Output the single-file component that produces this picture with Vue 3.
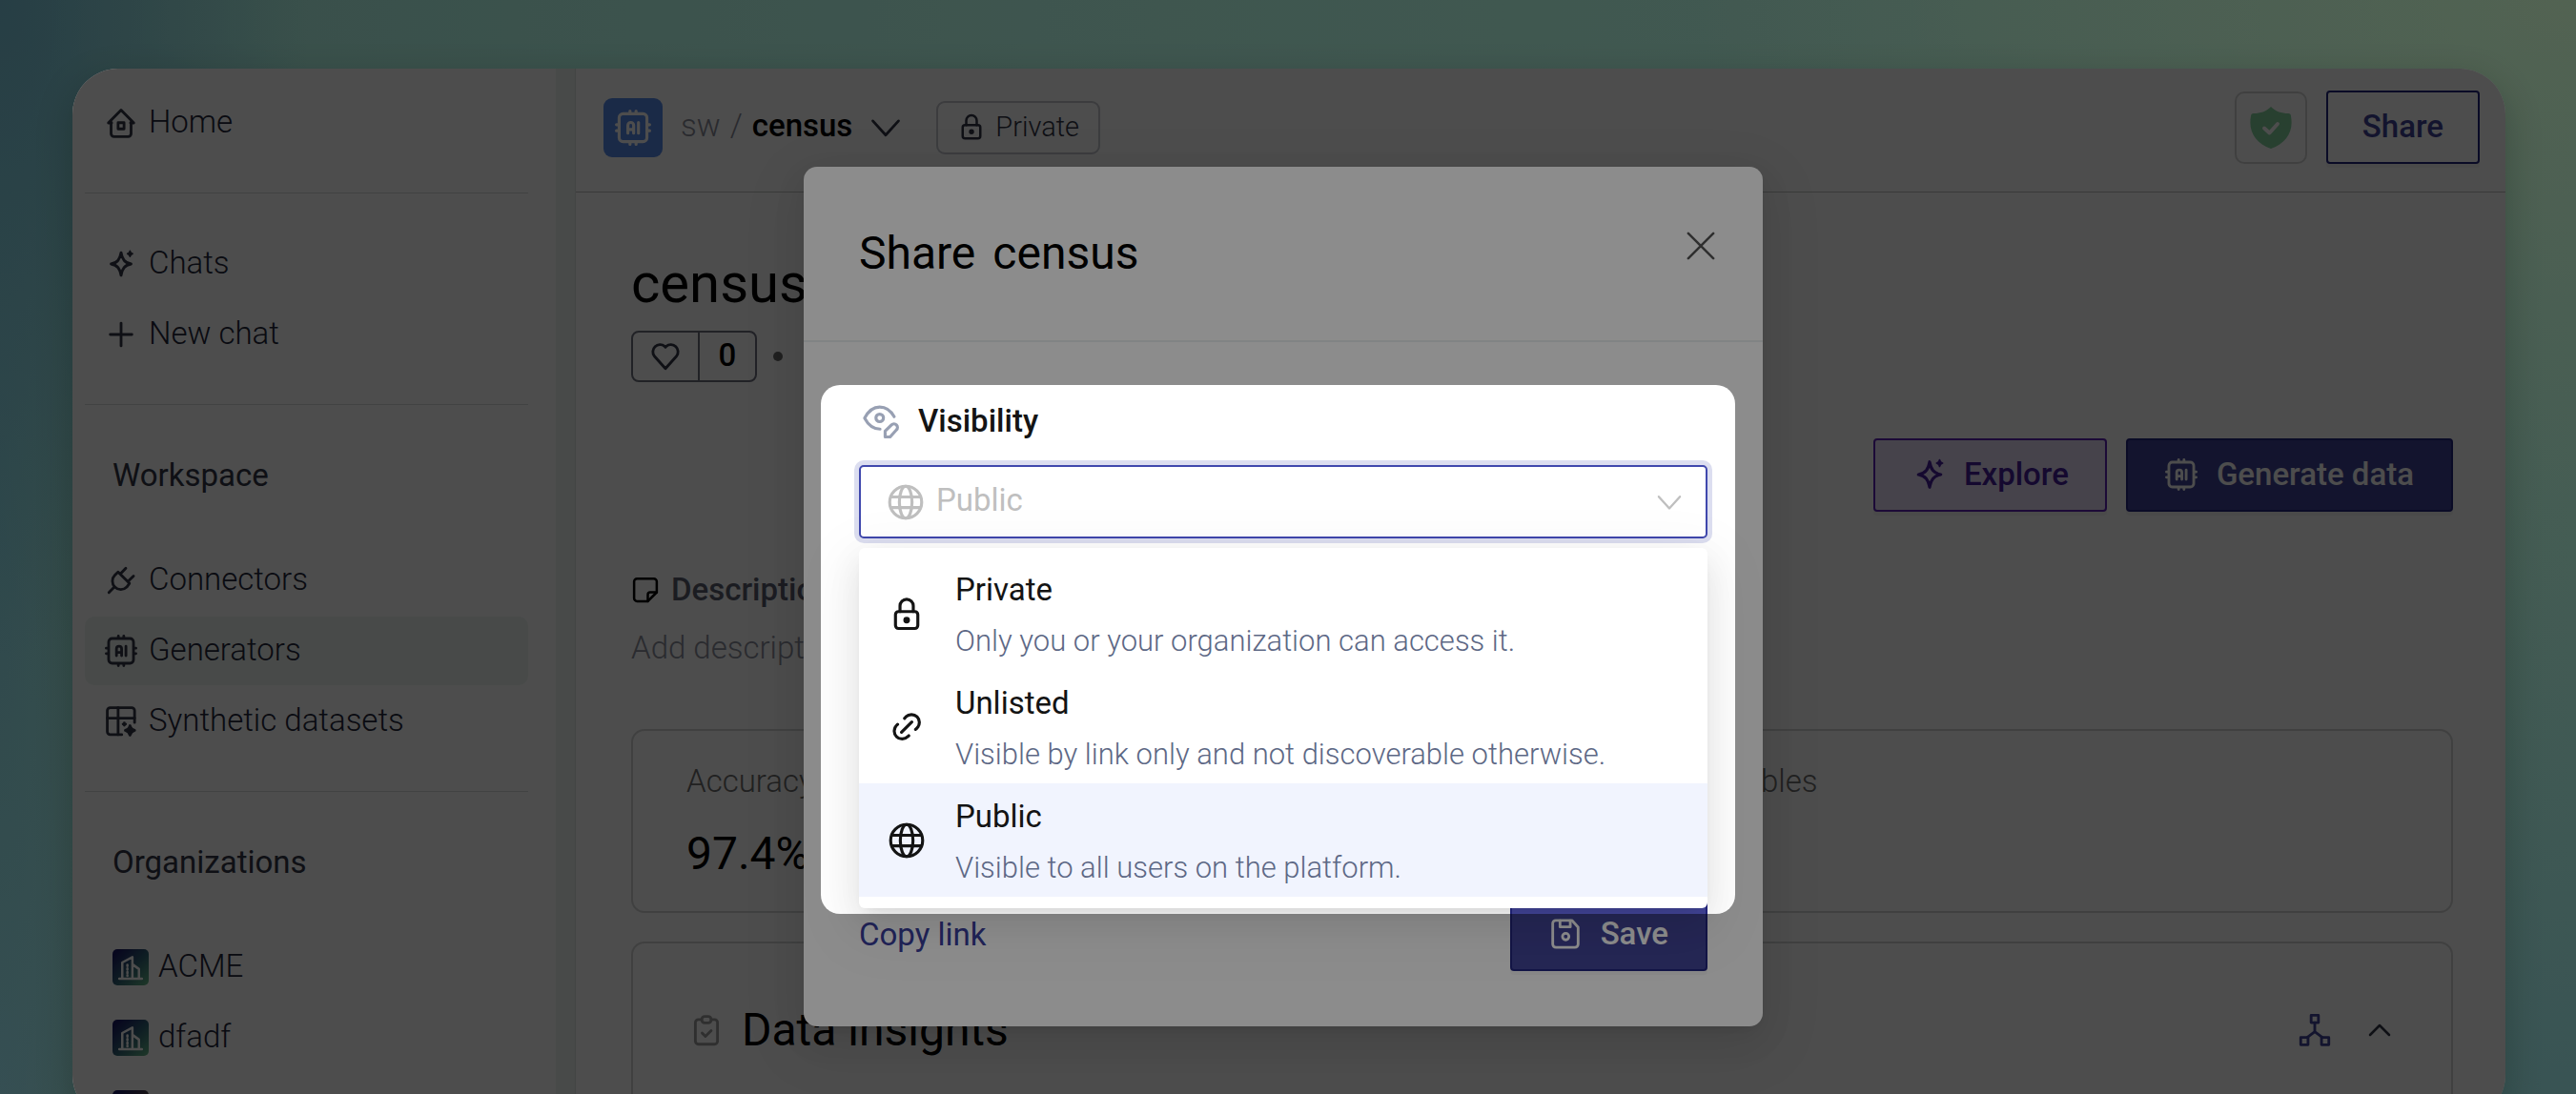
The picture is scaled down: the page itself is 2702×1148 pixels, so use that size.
<script setup>
import { ref } from 'vue'

const icons = {
  home: '<path d="M5 12H2.6L12 2.4 21.4 12H19"/><path d="M4.6 11.6V20a2.2 2.2 0 0 0 2.2 2.2h10.400a2.200 2.200 0 0 0 2.200-2.200v-8.400"/><rect x="9.800" y="11.800" width="4.400" height="4.600"/>',
  sparkles: '<path d="M12 3.600c.9 5 2.600 7.500 7.400 8.400-4.800.9-6.500 3.400-7.400 8.400-.9-5-2.600-7.500-7.400-8.400 4.800-.9 6.500-3.400 7.400-8.400z"/><path d="M18.600 2.200c.3 1.300.8 1.900 2 2.200-1.200.3-1.700.9-2 2.200-.3-1.300-.8-1.900-2-2.200 1.200-.3 1.700-.9 2-2.200z" fill="currentColor" stroke-width="1"/>',
  plus: '<path d="M12 3.600v16.800M4 12h16"/>',
  plug: '<path d="M9.800 5.800l8.400 8.400-2 2.800a5.700 5.700 0 1 1-8.800-8.800z"/><path d="M3 21l4-4M15.500 3l-3.700 3.900M21.200 8.800l-4 3.900"/>',
  chip: '<rect x="2.800" y="2.800" width="18.400" height="18.400" rx="2.600"/><path d="M8.600 15.600V10.400a1.900 1.900 0 0 1 3.800 0v5.200M8.600 13.200h3.800M15.600 8.600v7"/><path d="M10 2.600V1M14 2.600V1M10 23v-1.600M14 23v-1.600M2.600 10H1M2.600 14H1M23 10h-1.600M23 14h-1.600"/>',
  table: '<path d="M12.500 21.800H4a2.200 2.200 0 0 1-2.200-2.200V4A2.200 2.200 0 0 1 4 1.800h15.800A2.200 2.200 0 0 1 22 4v8.800"/><path d="M1.800 9.600H22M9.800 1.800v20"/><path d="M18.600 15.200c.5 2 1.200 2.900 3.400 3.500-2.200.6-2.900 1.500-3.400 3.500-.5-2-1.200-2.900-3.400-3.500 2.200-.6 2.900-1.500 3.400-3.500zM14.400 13.200v1.700M13.500 14h1.800" fill="currentColor"/>',
  lock: '<rect x="4.600" y="10.600" width="14.800" height="11.200" rx="2"/><path d="M7.600 10.600V6.800a4.400 4.400 0 0 1 8.800 0v3.800"/><circle cx="12" cy="16.200" r="1.200" fill="currentColor"/>',
  link: '<path d="M8.600 15.400l6.800-6.800"/><path d="M10.600 6.200l.9-1a5.200 5.200 0 0 1 7.400 7.400l-1 .9"/><path d="M13.400 17.700l-.6.600a5.200 5.200 0 0 1-7.500-7.400l.7-.7"/>',
  globe: '<circle cx="12" cy="12" r="10.600"/><path d="M2.200 8.500h19.600M2.200 15.500h19.600"/><ellipse cx="12" cy="12" rx="4.200" ry="10.600"/>',
  down: '<path d="M2.500 7l9.500 10.500L21.500 7"/>',
  up: '<path d="M4 16l8-8 8 8"/>',
  heart: '<path d="M12 21L3.800 11.800A5.300 5.300 0 0 1 11.400 4.500l.6.700.6-.7a5.300 5.300 0 0 1 7.600 7.300z"/>',
  note: '<path d="M14 21.500H5A2.500 2.500 0 0 1 2.500 19V5A2.500 2.500 0 0 1 5 2.500h14A2.500 2.500 0 0 1 21.500 5v9z"/><path d="M14 21.500V16a2 2 0 0 1 2-2h5.500"/>',
  clipboard: '<path d="M8.500 4.200H6A2.200 2.200 0 0 0 3.800 6.400v13.800A2.200 2.200 0 0 0 6 22.400h12a2.200 2.200 0 0 0 2.200-2.200V6.400A2.200 2.200 0 0 0 18 4.200h-2.500"/><rect x="8.500" y="1.800" width="7" height="4.800" rx="2.200"/><path d="M8.800 14.200l2.400 2.400 4.300-4.300"/>',
  network: '<rect x="9.300" y="1" width="5.400" height="5.400"/><rect x="1.600" y="17.400" width="5.400" height="5.400"/><rect x="17" y="17.400" width="5.400" height="5.400"/><path d="M12 6.400v7M6.400 17.400L12 13.200l5.600 4.200"/>',
  save: '<path d="M4.800 2h12L21.400 7v12.600a2.400 2.400 0 0 1-2.400 2.400H5A2.400 2.400 0 0 1 2.600 19.600V4.200A2.200 2.200 0 0 1 4.800 2z"/><path d="M8 2.200v4.600h7.600V2.200"/><circle cx="12.200" cy="14" r="2.400"/>',
  close: '<path d="M1.500 1.500l21 21M22.500 1.500l-21 21"/>',
  eye: '<circle cx="11.200" cy="9.800" r="2.500"/><path d="M11.400 17.200C7 17.200 3.700 14.800 1.200 10 3.700 5.100 7 2.600 11.200 2.600c4 0 7.200 2.200 9.600 6.400"/><path d="M14.800 22.400v-3.800l4.200-4.200a2.300 2.300 0 0 1 3.300 3.300l-4.200 4.700z"/>',
  building: '<path d="M2.500 21.500h19M5 21.500V8l8.500-4.500v18M13.500 9.500l5.500 4v8"/><path d="M9.300 10v1M9.300 13v1M9.300 16v1M9.300 18.600v.6"/>',
}

const workspace = [
  { label: 'Connectors', icon: 'plug', active: false },
  { label: 'Generators', icon: 'chip', active: true },
  { label: 'Synthetic datasets', icon: 'table', active: false },
]

const organizations = [
  { label: 'ACME', tone: 'teal' },
  { label: 'dfadf', tone: 'teal' },
  { label: 'Display Org 1743811528', tone: 'olive' },
]

const options = [
  { label: 'Private', icon: 'lock', text: 'Only you or your organization can access it.' },
  { label: 'Unlisted', icon: 'link', text: 'Visible by link only and not discoverable otherwise.' },
  { label: 'Public', icon: 'globe', text: 'Visible to all users on the platform.' },
]

const visibility = ref('Public')
</script>

<template>
  <div class="backdrop">
    <div class="window">
      <aside class="sidebar">
        <nav class="nav">
          <a class="item" href="#"><svg class="icon" viewBox="0 0 24 24" v-html="icons.home" /><span>Home</span></a>
          <hr class="rule" />
          <a class="item" href="#"><svg class="icon" viewBox="0 0 24 24" v-html="icons.sparkles" /><span>Chats</span></a>
          <a class="item" href="#"><svg class="icon" viewBox="0 0 24 24" v-html="icons.plus" /><span>New chat</span></a>
          <hr class="rule" />
          <h2 class="group">Workspace</h2>
          <a
            v-for="entry in workspace"
            :key="entry.label"
            class="item"
            :class="{ active: entry.active }"
            href="#"
          ><svg class="icon" viewBox="0 0 24 24" v-html="icons[entry.icon]" /><span>{{ entry.label }}</span></a>
          <hr class="rule" />
          <h2 class="group">Organizations</h2>
          <a v-for="org in organizations" :key="org.label" class="item org" href="#">
            <span class="avatar" :class="org.tone"><svg class="glyph" viewBox="0 0 24 24" v-html="icons.building" /></span>
            <span>{{ org.label }}</span>
          </a>
        </nav>
      </aside>

      <main class="main">
        <header class="topbar">
          <span class="tile"><svg class="icon large" viewBox="0 0 24 24" v-html="icons.chip" /></span>
          <div class="crumbs"><a href="#">sw</a><span>/</span><strong>census</strong></div>
          <button class="plain" type="button" aria-label="Switch generator"><svg class="icon" viewBox="0 0 24 24" v-html="icons.down" /></button>
          <span class="badge"><svg class="icon small" viewBox="0 0 24 24" v-html="icons.lock" />Private</span>
          <span class="shield">
            <svg class="shield-icon" viewBox="0 0 44 44">
              <path d="M22 0c5 5 11 7 18 7 2 0 3 1 3 3 3 16-5 28-21 34C6 38-2 26 1 10c0-2 1-3 3-3 7 0 13-2 18-7z" fill="#85d5a0" />
              <path d="M15 22.500l5.500 5L29 18" fill="none" stroke="#fff" stroke-width="4" stroke-linecap="round" stroke-linejoin="round" />
            </svg>
          </span>
          <button class="button outline" type="button">Share</button>
        </header>

        <section class="content">
          <h1 class="title">census</h1>
          <div class="meta">
            <div class="likes">
              <button class="like" type="button" aria-label="Like"><svg class="icon" viewBox="0 0 24 24" v-html="icons.heart" /></button>
              <span class="count">0</span>
            </div>
            <span class="dot"></span>
          </div>
          <div class="actions">
            <button class="button violet" type="button"><svg class="icon large" viewBox="0 0 24 24" v-html="icons.sparkles" />Explore</button>
            <button class="button solid" type="button"><svg class="icon" viewBox="0 0 24 24" v-html="icons.chip" />Generate data</button>
          </div>
          <h3 class="subhead"><svg class="icon small" viewBox="0 0 24 24" v-html="icons.note" />Description</h3>
          <p class="hint">Add description</p>

          <div class="card stats">
            <div class="stat"><span class="stat-label">Accuracy</span><span class="stat-value">97.4%</span></div>
            <div class="stat tables"><span class="stat-label">Tables</span><span class="stat-value">1</span></div>
          </div>

          <div class="card insights">
            <svg class="icon muted" viewBox="0 0 24 24" v-html="icons.clipboard" />
            <h2 class="insights-title">Data insights</h2>
            <button class="plain graph" type="button" aria-label="Show model"><svg class="icon" viewBox="0 0 24 24" v-html="icons.network" /></button>
            <button class="plain" type="button" aria-label="Collapse"><svg class="icon small" viewBox="0 0 24 24" v-html="icons.up" /></button>
          </div>
        </section>
      </main>

      <div class="mask">
        <section class="modal" role="dialog" aria-label="Share census">
          <header class="modal-head">
            <h2 class="modal-title"><span>Share</span><span>census</span></h2>
            <button class="plain close" type="button" aria-label="Close"><svg class="icon small" viewBox="0 0 24 24" v-html="icons.close" /></button>
          </header>
          <div class="modal-body">
            <div class="field">
              <label class="field-label" for="visibility"><svg class="icon eye" viewBox="0 0 24 24" v-html="icons.eye" />Visibility</label>
              <div class="select-box">
                <svg class="icon lead" viewBox="0 0 24 24" v-html="icons.globe" />
                <select id="visibility" v-model="visibility" class="select">
                  <option v-for="option in options" :key="option.label">{{ option.label }}</option>
                </select>
                <svg class="icon caret" viewBox="0 0 24 24" v-html="icons.down" />
                <ul class="menu" role="listbox">
                  <li
                    v-for="option in options"
                    :key="option.label"
                    class="option"
                    :class="{ chosen: option.label === visibility }"
                    role="option"
                    @click="visibility = option.label"
                  >
                    <svg class="icon option-icon" viewBox="0 0 24 24" v-html="icons[option.icon]" />
                    <div class="option-text">
                      <div class="option-label">{{ option.label }}</div>
                      <div class="option-note">{{ option.text }}</div>
                    </div>
                  </li>
                </ul>
              </div>
              <div class="spotlight"></div>
            </div>
            <footer class="modal-foot">
              <a class="copy" href="#">Copy link</a>
              <button class="button solid" type="button"><svg class="icon" viewBox="0 0 24 24" v-html="icons.save" />Save</button>
            </footer>
          </div>
        </section>
      </div>
    </div>
  </div>
</template>

<style>
body {
  margin: 0;
}
</style>

<style scoped>
.backdrop,
.backdrop * {
  box-sizing: border-box;
}

.backdrop {
  height: 100vh;
  overflow: hidden;
  padding: 72px 74px 0 76px;
  font-family: Roboto, "Liberation Sans", sans-serif;
  font-size: 33px;
  line-height: 48px;
  color: #000;
  background:
    radial-gradient(ellipse 12% 60% at 0 0, #47727e 0, rgba(71, 114, 126, 0) 100%),
    radial-gradient(ellipse 4% 90% at 0 45%, #57868c 0, rgba(87, 134, 140, 0) 100%),
    radial-gradient(ellipse 5% 50% at 0 100%, #6a979f 0, rgba(106, 151, 159, 0) 100%),
    radial-gradient(ellipse 34% 50% at 100% 0, #96b496 0, rgba(150, 180, 150, 0) 100%),
    radial-gradient(ellipse 20% 60% at 100% 110%, #64969a 0, rgba(100, 150, 154, 0) 100%),
    linear-gradient(90deg, #668f86 0, #729c90 40%, #7da999 100%);
}

h1,
h2,
h3,
p,
ul {
  margin: 0;
  padding: 0;
  font-size: inherit;
  font-weight: 400;
}

a {
  color: inherit;
  text-decoration: none;
}

button {
  font-family: inherit;
  font-size: inherit;
  line-height: inherit;
  cursor: pointer;
}

.icon,
.glyph {
  flex: none;
  width: 34px;
  height: 34px;
  fill: none;
  stroke: currentColor;
  stroke-width: 2;
  stroke-linecap: round;
  stroke-linejoin: round;
}

.icon.small {
  width: 30px;
  height: 30px;
}

.icon.large {
  width: 38px;
  height: 38px;
}

.plain {
  display: flex;
  padding: 0;
  border: 0;
  background: none;
  color: #333747;
}

.window {
  position: relative;
  display: flex;
  height: calc(100vh - 44px);
  border-radius: 48px;
  background: #fff;
  box-shadow: 0 12px 36px rgba(0, 30, 20, 0.25);
}

/* Sidebar */
.sidebar {
  flex: none;
  width: 528px;
  overflow: hidden;
  padding: 21px 49px 0 13px;
  border-right: 1px solid #e0e5e3;
  border-radius: 48px 0 0 48px;
  background: linear-gradient(90deg, #fff 507px, #f0f6f3 507px);
}

.nav {
  display: flex;
  flex-direction: column;
  gap: 2px;
}

.item {
  display: flex;
  flex: none;
  align-items: center;
  gap: 12px;
  height: 72px;
  padding: 0 21px;
  border-radius: 10px;
  color: #333747;
  font-weight: 300;
  white-space: nowrap;
}

.item > span:last-child {
  padding-bottom: 2px;
  color: #23263a;
}

.item.active {
  background: #f1f7f4;
}

.org {
  gap: 10px;
  padding: 0 29px;
}

.avatar {
  display: grid;
  flex: none;
  place-items: center;
  width: 38px;
  height: 38px;
  border-radius: 5px;
  color: #fff;
}

.avatar.teal {
  background: linear-gradient(135deg, #1a1a66 10%, #336677 55%, #66bb88 100%);
}

.avatar.olive {
  background: linear-gradient(135deg, #1a1a66 10%, #776633 90%);
}

.glyph {
  width: 30px;
  height: 30px;
}

.rule {
  width: 100%;
  height: 1px;
  margin: 35px 0 36px;
  border: 0;
  background: #d9dddb;
}

.group {
  height: 72px;
  margin-bottom: 36px;
  padding: 12px 29px;
  color: #333747;
}

/* Main column */
.main {
  display: flex;
  flex: 1;
  flex-direction: column;
  min-width: 0;
  overflow: hidden;
  border-radius: 0 48px 48px 0;
}

.topbar {
  display: flex;
  flex: none;
  align-items: center;
  height: 130px;
  padding: 0 27px 6px 29px;
  border-bottom: 1px solid #bfc3c2;
}

.tile {
  display: grid;
  place-items: center;
  width: 62px;
  height: 62px;
  margin-right: 19px;
  border-radius: 9px;
  background: #5a8ced;
  color: #fff;
}

.crumbs {
  display: flex;
  gap: 10px;
  margin-right: 18px;
  padding-bottom: 4px;
  color: #8b8e9c;
  font-weight: 300;
}

.crumbs strong {
  color: #000;
  font-weight: 500;
}

.badge {
  display: flex;
  align-items: center;
  gap: 10px;
  height: 56px;
  margin-left: 36px;
  padding: 0 20px 2px;
  border: 2px solid #c6c8d0;
  border-radius: 9px;
  color: #333747;
  font-size: 29px;
  font-weight: 300;
}

.shield {
  display: grid;
  place-items: center;
  width: 76px;
  height: 76px;
  margin: 0 20px 0 auto;
  border: 2px solid #d6d8d8;
  border-radius: 10px;
}

.shield-icon {
  width: 44px;
  height: 44px;
}

.button {
  display: flex;
  flex: none;
  align-items: center;
  justify-content: center;
  gap: 20px;
  height: 77px;
  padding: 0 39px 2px;
  border: 2px solid #23267f;
  border-radius: 4px;
  font-weight: 500;
  box-shadow: 0 4px 0 rgba(0, 0, 0, 0.03);
}

.outline {
  padding: 0 36px 2px;
  background: #fff;
  color: #434699;
}

.violet {
  gap: 17px;
  padding: 0 38px 2px;
  border-color: #5f23b8;
  background: #e9dffa;
  color: #47209f;
}

.solid {
  background: #434699;
  color: #fff;
}

.content {
  flex: none;
  padding: 59px 55px 0 58px;
}

.title {
  font-size: 58px;
  line-height: 72px;
}

.meta {
  display: flex;
  align-items: center;
  gap: 17px;
  margin-top: 14px;
}

.likes {
  display: flex;
  height: 54px;
  border: 2px solid #6f7280;
  border-radius: 8px;
}

.like {
  display: grid;
  place-items: center;
  width: 70px;
  padding: 0;
  border: 0;
  border-right: 2px solid #6f7280;
  background: none;
  color: #333747;
}

.count {
  width: 58px;
  font-weight: 500;
  text-align: center;
}

.dot {
  width: 10px;
  height: 10px;
  border-radius: 50%;
  background: #6b6b6b;
}

.actions {
  display: flex;
  justify-content: flex-end;
  gap: 20px;
  margin-top: 59px;
}

.subhead {
  display: flex;
  align-items: center;
  gap: 12px;
  margin-top: 58px;
  color: #5b5e70;
  font-weight: 500;
}

.subhead .icon {
  color: #000;
}

.hint {
  margin: 13px 0 61px;
  color: #8d909e;
  font-weight: 300;
}

.card {
  border: 2px solid #d6d8d8;
  border-radius: 14px;
}

.stats {
  display: grid;
  grid-template-columns: repeat(5, 1fr);
  gap: 24px;
  margin-bottom: 30px;
  padding: 29px 56px 28px;
}

.stat {
  display: flex;
  flex-direction: column;
  gap: 20px;
}

.stat.tables {
  grid-column: 4;
}

.stat-label {
  color: #6d6d6d;
  font-weight: 300;
}

.stat-value {
  font-size: 48px;
  line-height: 64px;
}

.insights {
  display: flex;
  align-items: center;
  min-height: 240px;
  padding: 0 60px 54px 60px;
}

.muted {
  color: #9d9d9d;
}

.insights-title {
  margin: 0 auto 0 20px;
  font-size: 48px;
  line-height: 64px;
}

.graph {
  margin-right: 36px;
  color: #434699;
}

/* Share dialog */
.mask {
  position: absolute;
  inset: 0;
  display: flex;
  align-items: flex-start;
  justify-content: center;
  padding: 103px 12px 0 0;
  border-radius: 48px;
  background: rgba(0, 0, 0, 0.45);
}

.modal {
  width: 1006px;
  border-radius: 14px;
  background: #fff;
  box-shadow:
    0 12px 34px rgba(0, 0, 0, 0.08),
    0 6px 12px -8px rgba(0, 0, 0, 0.12),
    0 18px 60px 16px rgba(0, 0, 0, 0.05);
}

.modal-head {
  display: flex;
  align-items: center;
  justify-content: space-between;
  height: 184px;
  padding: 0 50px 0 58px;
  border-bottom: 2px solid #eceff0;
}

.modal-title {
  display: flex;
  gap: 18px;
  font-size: 48px;
  line-height: 64px;
}

.close {
  margin-bottom: 16px;
  color: #555;
}

.modal-body {
  display: flex;
  flex-direction: column;
  justify-content: space-between;
  min-height: 718px;
  padding: 58px;
}

.field {
  position: relative;
  z-index: 1;
}

.field-label {
  display: flex;
  align-items: center;
  gap: 20px;
  margin-bottom: 22px;
  padding: 1px 0 0 4px;
  color: #141414;
  font-weight: 500;
}

.icon.eye {
  width: 38px;
  height: 38px;
  color: #98a0b3;
}

.select-box {
  position: relative;
  display: flex;
  align-items: center;
}

.select {
  width: 100%;
  height: 77px;
  padding: 0 60px 4px 79px;
  border: 2px solid #4048ad;
  border-radius: 5px;
  outline: 0;
  appearance: none;
  background: #fff;
  box-shadow: 0 0 0 5px #dcdef0;
  color: #bfbfbf;
  font: inherit;
}

.icon.lead,
.icon.caret {
  position: absolute;
  color: #bfbfbf;
  pointer-events: none;
}

.icon.lead {
  left: 30px;
  width: 38px;
  height: 38px;
}

.icon.caret {
  right: 26px;
  width: 28px;
  height: 28px;
}

.menu {
  position: absolute;
  top: calc(100% + 10px);
  right: 0;
  left: 0;
  padding: 9px 0 12px;
  border-radius: 6px;
  background: #fff;
  box-shadow:
    0 12px 34px rgba(0, 0, 0, 0.08),
    0 6px 12px -8px rgba(0, 0, 0, 0.12),
    0 18px 60px 16px rgba(0, 0, 0, 0.05);
  list-style: none;
}

.option {
  display: flex;
  align-items: center;
  gap: 32px;
  height: 119px;
  padding: 0 31px;
  cursor: pointer;
}

.option.chosen {
  background: #f1f4fe;
}

.option-icon {
  width: 38px;
  height: 38px;
  color: #141414;
}

.option-text {
  padding-top: 4px;
  line-height: 54px;
}

.option-label {
  color: #141414;
}

.option-note {
  color: #5d6885;
  font-size: 31px;
  font-weight: 300;
}

.spotlight {
  position: absolute;
  top: -13px;
  right: -29px;
  bottom: -394px;
  left: -40px;
  border-radius: 20px;
  box-shadow: 0 0 0 3000px rgba(0, 0, 0, 0.45);
  pointer-events: none;
}

.modal-foot {
  display: flex;
  align-items: center;
  justify-content: space-between;
}

.copy {
  color: #3b409f;
}
</style>
